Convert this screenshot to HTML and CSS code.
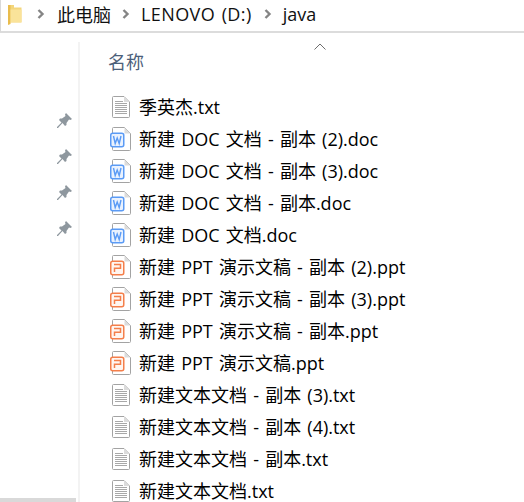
FILE: index.html
```html
<!DOCTYPE html>
<html lang="zh">
<head>
<meta charset="utf-8">
<title>java</title>
<link rel="stylesheet" href="styles.css">
</head>
<body>
<svg class="defs" width="0" height="0">
  <defs>
    <symbol id="page" viewBox="0 0 18 22">
      <path d="M.5 1.500a1 1 0 0 1 1-1H12L17.500 6v14.500a1 1 0 0 1-1 1h-15a1 1 0 0 1-1-1z" fill="#fff" stroke="#a3a3a3"/>
      <path d="M12 .5V6h5.500z" fill="#dcdcdc"/>
    </symbol>
    <symbol id="txt" viewBox="0 0 18 22">
      <use href="#page"/>
      <path d="M3 5.500h8M3 7.500h12M3 9.500h12M3 11.500h12M3 13.500h12M3 15.500h12M3 17.500h12" stroke="#a8a8a8" fill="none"/>
    </symbol>
    <symbol id="doc" viewBox="0 0 21 24">
      <path d="M2.500 1.500a1 1 0 0 1 1-1H14.500L20.500 6.500v16a1 1 0 0 1-1 1h-16a1 1 0 0 1-1-1z" fill="#fff" stroke="#a3a3a3"/>
      <path d="M14.500 .5v6h6z" fill="#dcdcdc"/>
      <rect x=".75" y="6.250" width="13" height="13.500" rx="2" fill="#eaf2fe" stroke="#5b9bf5" stroke-width="1.500"/>
      <path d="M3.500 9l1.700 7.500 2-5.500 2 5.500L11 9" fill="none" stroke="#5b9bf5" stroke-width="1.400"/>
    </symbol>
    <symbol id="ppt" viewBox="0 0 21 24">
      <path d="M2.500 1.500a1 1 0 0 1 1-1H14.500L20.500 6.500v16a1 1 0 0 1-1 1h-16a1 1 0 0 1-1-1z" fill="#fff" stroke="#a3a3a3"/>
      <path d="M14.500 .5v6h6z" fill="#dcdcdc"/>
      <rect x=".75" y="6.250" width="13" height="13.500" rx="2" fill="#fff6f1" stroke="#f47f4b" stroke-width="1.500"/>
      <path d="M4 9.500h6.500v3.700H4.500M4.500 12.500v4.500" fill="none" stroke="#f47f4b" stroke-width="1.500"/>
    </symbol>
    <symbol id="pin" viewBox="0 0 18 18">
      <path transform="translate(2 2)" d="M9 0l6 6-1.500 1-1.500-.5-2.500 3.500v2l-1.500 1-2.500-3-4.500 5H0v-1l4.500-4.500L2 7l1-1.500h2l3.500-2.500L8 1.500z" fill="#8e979e"/>
    </symbol>
    <symbol id="sep" viewBox="0 0 8 10">
      <path d="M1.500 1L5.500 5l-4 4" fill="none" stroke="#858585" stroke-width="2.400"/>
    </symbol>
  </defs>
</svg>

<header class="bar">
  <svg class="folder" viewBox="0 0 15 20" width="15" height="20">
    <path d="M1 0h6v2.500h7.500v15H3z" fill="#f3d67c"/>
    <path d="M1 0h2.500v19L1 20z" fill="#e9bc4d"/>
    <path d="M3.500 4.500h11v12.800h-11z" fill="#fae39a"/>
  </svg>
  <nav class="crumbs">
    <svg class="sep"><use href="#sep"/></svg><span>此电脑</span>
    <svg class="sep"><use href="#sep"/></svg><span class="wide">LENOVO (D:)</span>
    <svg class="sep"><use href="#sep"/></svg><span>java</span>
  </nav>
</header>

<div class="body">
  <aside class="side">
    <div class="pins">
      <svg class="pin"><use href="#pin"/></svg>
      <svg class="pin"><use href="#pin"/></svg>
      <svg class="pin"><use href="#pin"/></svg>
      <svg class="pin"><use href="#pin"/></svg>
    </div>
    <div class="hscroll"></div>
  </aside>
  <main class="list">
    <svg class="sort" viewBox="0 0 12 7" width="12" height="7"><path d="M.5 6.500L6 1l5.500 5.500" fill="none" stroke="#6d6d6d"/></svg>
    <div class="head">名称</div>
    <ul class="files">
      <li class="row"><svg class="ic-txt"><use href="#txt"/></svg><span>季英杰.txt</span></li>
      <li class="row"><svg class="ic"><use href="#doc"/></svg><span>新建 DOC 文档 - 副本 (2).doc</span></li>
      <li class="row"><svg class="ic"><use href="#doc"/></svg><span>新建 DOC 文档 - 副本 (3).doc</span></li>
      <li class="row"><svg class="ic"><use href="#doc"/></svg><span>新建 DOC 文档 - 副本.doc</span></li>
      <li class="row"><svg class="ic"><use href="#doc"/></svg><span>新建 DOC 文档.doc</span></li>
      <li class="row"><svg class="ic"><use href="#ppt"/></svg><span>新建 PPT 演示文稿 - 副本 (2).ppt</span></li>
      <li class="row"><svg class="ic"><use href="#ppt"/></svg><span>新建 PPT 演示文稿 - 副本 (3).ppt</span></li>
      <li class="row"><svg class="ic"><use href="#ppt"/></svg><span>新建 PPT 演示文稿 - 副本.ppt</span></li>
      <li class="row"><svg class="ic"><use href="#ppt"/></svg><span>新建 PPT 演示文稿.ppt</span></li>
      <li class="row"><svg class="ic-txt"><use href="#txt"/></svg><span>新建文本文档 - 副本 (3).txt</span></li>
      <li class="row"><svg class="ic-txt"><use href="#txt"/></svg><span>新建文本文档 - 副本 (4).txt</span></li>
      <li class="row"><svg class="ic-txt"><use href="#txt"/></svg><span>新建文本文档 - 副本.txt</span></li>
      <li class="row"><svg class="ic-txt"><use href="#txt"/></svg><span>新建文本文档.txt</span></li>
    </ul>
  </main>
</div>
</body>
</html>
```
FILE: styles.css
```css
html, body {
  margin: 0;
  height: 100%;
  overflow: hidden;
  background: #fff;
  color: #000;
  font-family: "Open Sans", "Noto Sans CJK SC", sans-serif;
  font-size: 18px;
  word-spacing: 1.5px;
}
body { display: flex; flex-direction: column; }
.defs { position: absolute; }
.bar {
  height: 31px;
  display: flex;
  align-items: center;
  padding-left: 6px;
  border-left: 1px solid #d9d9d9;
  border-bottom: 2px solid #dcdcdc;
  flex: none;
}
.folder { flex: none; margin-top: -1px; }
.crumbs {
  display: flex;
  align-items: center;
  margin-left: 15px;
  margin-top: -3px;
  color: #111;
  white-space: nowrap;
}
.crumbs .sep { width: 8px; height: 10px; margin-right: 11px; }
.crumbs .sep:first-child { margin-right: 12px; }
.crumbs span { margin-right: 11px; }
.crumbs .wide { letter-spacing: 0.4px; margin-right: 12px; }
.body { flex: 1; display: flex; min-height: 0; }
.side {
  width: 78px;
  flex: none;
  position: relative;
  margin-top: 9px;
  border-right: 2px solid #f3f3f3;
}
.pins {
  display: flex;
  flex-direction: column;
  gap: 18px;
  padding: 69px 0 0 55px;
}
.pin { width: 18px; height: 18px; }
.hscroll {
  position: absolute;
  left: 0;
  bottom: 0;
  width: 76px;
  height: 4px;
  background: #d9d9d9;
}
.list { flex: 1; position: relative; padding-left: 28px; }
.sort { position: absolute; left: 234px; top: 10px; }
.head {
  color: #4c607a;
  font-size: 18px;
  line-height: 22px;
  padding-top: 18px;
}
.files {
  list-style: none;
  margin: 0 0 0 2px;
  padding: 18px 0 0;
}
.row {
  height: 32px;
  display: flex;
  align-items: center;
  white-space: nowrap;
  line-height: 32px;
}
.ic { width: 21px; height: 24px; margin-right: 8px; flex: none; margin-top: -1px; }
.ic-txt { width: 18px; height: 22px; margin-right: 9px; margin-left: 2px; flex: none; }
```
